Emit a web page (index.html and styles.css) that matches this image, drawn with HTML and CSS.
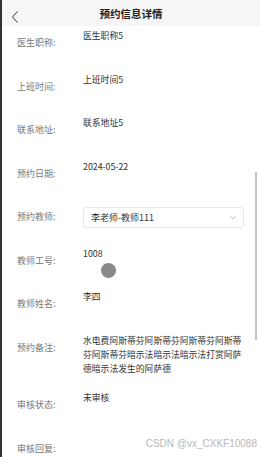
FILE: index.html
```html
<!DOCTYPE html>
<html lang="zh-CN">
<head>
  <meta charset="UTF-8">
  <meta name="viewport" content="width=device-width, initial-scale=1.0">
  <title>预约信息详情</title>
  <link rel="stylesheet" href="styles.css">
</head>
<body>
  <div class="page">
    <div class="nav-bar">
      <span class="nav-back">
        <svg width="8" height="14" viewBox="0 0 8 14"><path d="M6.5 1.5L1.5 7L6.5 12.5" fill="none" stroke="#333" stroke-width="1"/></svg>
      </span>
      <span class="nav-title">预约信息详情</span>
    </div>

    <div class="form">
      <div class="form-item">
        <div class="form-label">医生职称:</div>
        <div class="form-value">医生职称5</div>
      </div>
      <div class="form-item">
        <div class="form-label">上班时间:</div>
        <div class="form-value">上班时间5</div>
      </div>
      <div class="form-item">
        <div class="form-label">联系地址:</div>
        <div class="form-value">联系地址5</div>
      </div>
      <div class="form-item">
        <div class="form-label">预约日期:</div>
        <div class="form-value">2024-05-22</div>
      </div>
      <div class="form-item select-item">
        <div class="form-label">预约教师:</div>
        <div class="form-select">
          <span>李老师-教师111</span>
          <svg width="8" height="5" viewBox="0 0 8 5"><path d="M1 1L4 4L7 1" fill="none" stroke="#bbb" stroke-width="0.9"/></svg>
        </div>
      </div>
      <div class="form-item">
        <div class="form-label">教师工号:</div>
        <div class="form-value">1008</div>
      </div>
      <div class="form-item">
        <div class="form-label">教师姓名:</div>
        <div class="form-value">李四</div>
      </div>
      <div class="form-item">
        <div class="form-label">预约备注:</div>
        <div class="form-value">水电费阿斯蒂芬阿斯蒂芬阿斯蒂芬阿斯蒂芬阿斯蒂芬暗示法暗示法暗示法打赏阿萨德暗示法发生的阿萨德</div>
      </div>
      <div class="form-item">
        <div class="form-label">审核状态:</div>
        <div class="form-value">未审核</div>
      </div>
      <div class="form-item">
        <div class="form-label">审核回复:</div>
        <div class="form-value"></div>
      </div>
    </div>

    <div class="touch-dot"></div>
    <div class="scroll-thumb"></div>
    <div class="watermark">CSDN @vx_CXKF10088</div>
  </div>
</body>
</html>
```

FILE: styles.css
```css
* {
  margin: 0;
  padding: 0;
  box-sizing: border-box;
}
body {
  font-family: "Noto Sans CJK SC", "Noto Sans", sans-serif;
  background: #fff;
  color: #333;
  overflow: hidden;
}
.page {
  position: relative;
  height: 457px;
  border-left: 2px solid #333;
  overflow: hidden;
}
.nav-bar {
  display: flex;
  align-items: center;
  justify-content: center;
  position: relative;
  height: 26px;
  background: #f6f6f6;
}
.nav-back {
  position: absolute;
  left: 9px;
  top: 5px;
}
.nav-title {
  font-size: 10.5px;
  font-weight: bold;
  color: #222;
}
.form {
  padding: 3px 15px 0 15px;
}
.form-item {
  display: flex;
  align-items: flex-start;
  min-height: 28px;
  margin-bottom: 15.5px;
}
.form-item:last-child {
  margin-top: 3px;
}
.form-label {
  width: 66px;
  flex-shrink: 0;
  height: 28px;
  line-height: 28px;
  font-size: 9px;
  color: #777;
}
.form-value {
  flex: 1;
  font-size: 8.8px;
  line-height: 14px;
  color: #333;
}
.select-item {
  align-items: center;
}
.form-select {
  flex: 1;
  display: flex;
  align-items: center;
  justify-content: space-between;
  height: 21px;
  margin-right: 1px;
  padding: 0 6px 0 7px;
  border: 1px solid #e8e8e8;
  border-radius: 3px;
  font-size: 9px;
  color: #333;
}
.touch-dot {
  position: absolute;
  left: 99px;
  top: 263px;
  width: 15px;
  height: 15px;
  border-radius: 50%;
  background: #888;
}
.scroll-thumb {
  position: absolute;
  right: 3px;
  top: 172px;
  width: 2px;
  height: 168px;
  background: #c4c4c4;
}
.watermark {
  position: absolute;
  right: 3px;
  bottom: 8px;
  font-family: "Liberation Sans", sans-serif;
  font-size: 10px;
  color: #b8b8b8;
}
```
